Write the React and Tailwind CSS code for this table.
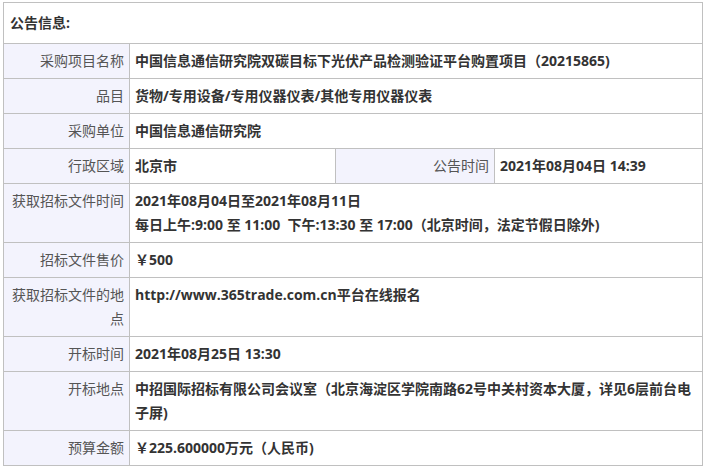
import React from 'react';

const rows = [
  { label: '采购项目名称', value: '中国信息通信研究院双碳目标下光伏产品检测验证平台购置项目（20215865)' },
  { label: '品目', value: '货物/专用设备/专用仪器仪表/其他专用仪器仪表' },
  { label: '采购单位', value: '中国信息通信研究院' },
  { split: true },
  {
    label: '获取招标文件时间',
    value: (
      <>
        2021年08月04日至2021年08月11日
        <br />
        每日上午:9:00 至 11:00&nbsp;&nbsp;下午:13:30 至 17:00（北京时间，法定节假日除外)
      </>
    ),
  },
  { label: '招标文件售价', value: '￥500' },
  { label: '获取招标文件的地点', value: 'http://www.365trade.com.cn平台在线报名' },
  { label: '开标时间', value: '2021年08月25日 13:30' },
  { label: '开标地点', value: '中招国际招标有限公司会议室（北京海淀区学院南路62号中关村资本大厦，详见6层前台电子屏)' },
  { label: '预算金额', value: '￥225.600000万元（人民币)' },
];

const labelCls = 'border border-[#c0c0c0] bg-[#f3f3fd] text-[#555] text-right align-middle px-[5px] py-[5px] font-normal';
const valueCls = 'border border-[#c0c0c0] bg-white text-[#333] text-left align-top px-[5px] py-[5px] font-bold';

export default function App() {
  return (
    <div className="bg-white w-[706px] h-[468px] pt-[2px] pl-[3px] font-['Open_Sans','Noto_Sans_CJK_SC',sans-serif] text-[14px] leading-[24px]">
      <table className="w-[699px] table-fixed border-collapse">
        <colgroup>
          <col className="w-[126px]" />
          <col className="w-[206px]" />
          <col className="w-[159px]" />
          <col className="w-[208px]" />
        </colgroup>
        <tbody>
          <tr>
            <td colSpan={4} className="border border-[#c0c0c0] px-[6px] py-[8px] font-bold text-[#333]">
              公告信息:
            </td>
          </tr>
          {rows.map((r, i) =>
            r.split ? (
              <tr key={i}>
                <td className={labelCls}>行政区域</td>
                <td className={valueCls}>北京市</td>
                <td className={labelCls}>公告时间</td>
                <td className={valueCls}>2021年08月04日 14:39</td>
              </tr>
            ) : (
              <tr key={i}>
                <td className={labelCls + ' align-top'}>{r.label}</td>
                <td colSpan={3} className={valueCls}>{r.value}</td>
              </tr>
            )
          )}
        </tbody>
      </table>
    </div>
  );
}
